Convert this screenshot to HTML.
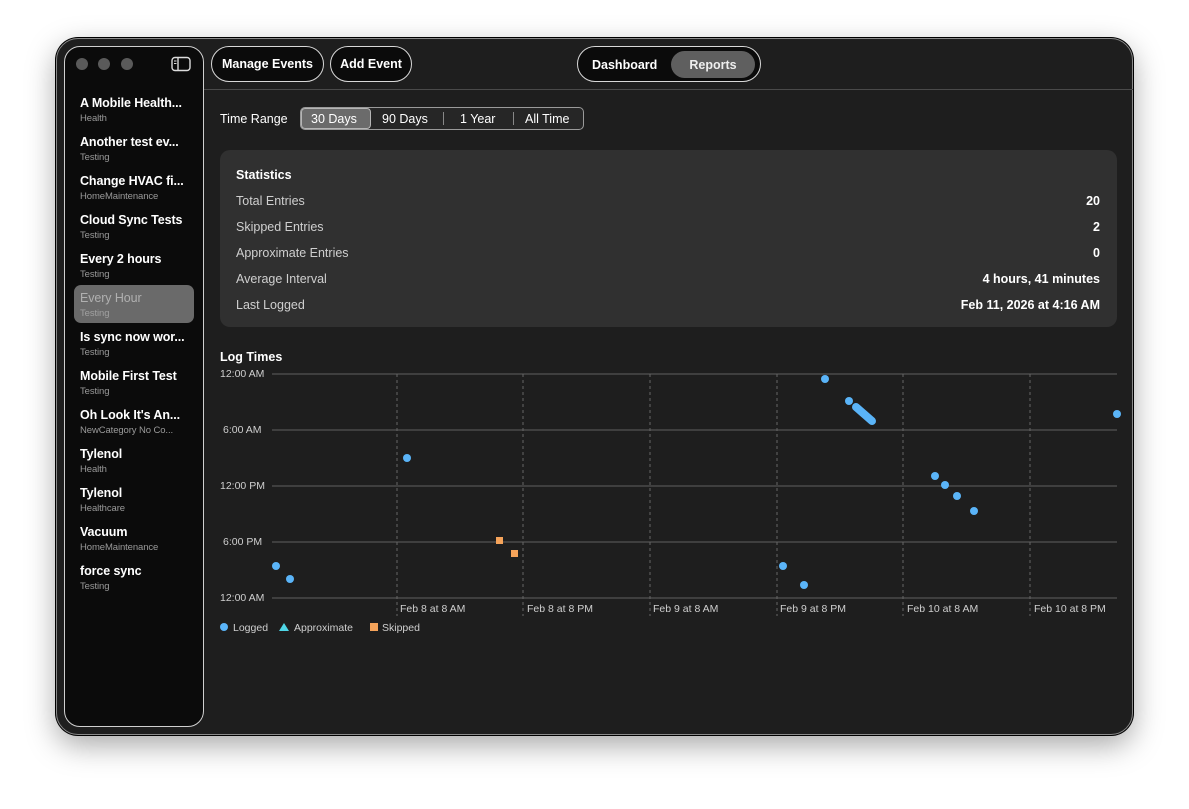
<!DOCTYPE html>
<html><head><meta charset="utf-8"><style>
*{margin:0;padding:0;box-sizing:border-box}
body{width:1189px;height:809px;background:#fff;font-family:"Liberation Sans",Arial,sans-serif;position:relative;overflow:hidden;color:#fff}
.win{position:absolute;left:56px;top:38px;width:1077px;height:697px;background:#1e1e1e;border-radius:22px;border:1px solid #8a8a8a;box-shadow:0 10px 30px rgba(0,0,0,.35),0 0 0 1px #000}
.side{position:absolute;left:64px;top:46px;width:140px;height:681px;background:#0b0b0b;border:1.5px solid #d0d0d0;border-radius:16px}
.dot{position:absolute;top:58px;width:12px;height:12px;border-radius:50%;background:#5a5a5a}
.item{position:absolute;left:80px;font-size:12.5px;font-weight:bold;letter-spacing:-.1px}
.item small{display:block;font-size:9.5px;color:#9a9a9a;font-weight:normal;margin-top:3px}
.btn{position:absolute;top:46px;height:36px;border:1.5px solid #d8d8d8;border-radius:18px;background:#0b0b0b;font-size:12.5px;font-weight:bold;line-height:35px;text-align:center}
.lbl{position:absolute;font-size:12.5px}
.r{position:absolute;font-size:12.5px;color:#cfcfcf;left:236px}
.v{position:absolute;font-size:12.5px;font-weight:bold;right:89px}
.ax{position:absolute;font-size:10.5px;color:#cfcfcf}
</style></head><body>
<div class="win"></div>
<div class="side"></div>
<div class="dot" style="left:76px"></div><div class="dot" style="left:98px"></div><div class="dot" style="left:121px"></div>
<svg style="position:absolute;left:171px;top:56px" width="20" height="16"><rect x="1" y="1.5" width="18" height="13" rx="3" fill="none" stroke="#ddd" stroke-width="1.4"/><line x1="7" y1="2" x2="7" y2="14" stroke="#ddd" stroke-width="1.4"/><line x1="3" y1="5" x2="5.5" y2="5" stroke="#ddd"/><line x1="3" y1="7.5" x2="5.5" y2="7.5" stroke="#ddd"/></svg>
<div style="position:absolute;left:74px;top:285px;width:120px;height:38px;background:#6a6a6a;border-radius:7px"></div>
<div class="item" style="top:96px">A Mobile Health...<small>Health</small></div>
<div class="item" style="top:135px">Another test ev...<small>Testing</small></div>
<div class="item" style="top:174px">Change HVAC fi...<small>HomeMaintenance</small></div>
<div class="item" style="top:213px">Cloud Sync Tests<small>Testing</small></div>
<div class="item" style="top:252px">Every 2 hours<small>Testing</small></div>
<div class="item" style="top:291px;color:#b0b0b0;font-weight:normal">Every Hour<small style="color:#a0a0a0">Testing</small></div>
<div class="item" style="top:330px">Is sync now wor...<small>Testing</small></div>
<div class="item" style="top:369px">Mobile First Test<small>Testing</small></div>
<div class="item" style="top:408px">Oh Look It's An...<small>NewCategory No Co...</small></div>
<div class="item" style="top:447px">Tylenol<small>Health</small></div>
<div class="item" style="top:486px">Tylenol<small>Healthcare</small></div>
<div class="item" style="top:525px">Vacuum<small>HomeMaintenance</small></div>
<div class="item" style="top:564px">force sync<small>Testing</small></div>

<div class="btn" style="left:211px;width:113px">Manage Events</div>
<div class="btn" style="left:330px;width:82px">Add Event</div>
<div class="btn" style="left:577px;width:184px"></div>
<div style="position:absolute;left:592px;top:58px;font-size:12.5px;font-weight:bold">Dashboard</div>
<div style="position:absolute;left:671px;top:51px;width:84px;height:27px;border-radius:14px;background:#5f5f5f;font-size:12.5px;font-weight:bold;text-align:center;line-height:28px;color:#eee">Reports</div>
<div style="position:absolute;left:204px;top:89px;width:929px;height:1px;background:#4a4a4a"></div>

<div class="lbl" style="left:220px;top:112px">Time Range</div>
<div style="position:absolute;left:300px;top:107px;width:284px;height:23px;border:1px solid #9a9a9a;border-radius:5px;background:#262626"></div>
<div style="position:absolute;left:301px;top:108px;width:70px;height:21px;border-radius:4px;background:#6b6b6b;border:1px solid #b5b5b5"></div>
<div class="lbl" style="left:311px;top:112px">30 Days</div>
<div class="lbl" style="left:382px;top:112px">90 Days</div>
<div style="position:absolute;left:443px;top:112px;width:1px;height:13px;background:#888"></div>
<div class="lbl" style="left:460px;top:112px">1 Year</div>
<div style="position:absolute;left:513px;top:112px;width:1px;height:13px;background:#888"></div>
<div class="lbl" style="left:525px;top:112px">All Time</div>

<div style="position:absolute;left:220px;top:150px;width:897px;height:177px;background:#303030;border-radius:10px"></div>
<div class="lbl" style="left:236px;top:168px;font-weight:bold">Statistics</div>
<div class="r" style="top:194px">Total Entries</div><div class="v" style="top:194px">20</div>
<div class="r" style="top:220px">Skipped Entries</div><div class="v" style="top:220px">2</div>
<div class="r" style="top:246px">Approximate Entries</div><div class="v" style="top:246px">0</div>
<div class="r" style="top:272px">Average Interval</div><div class="v" style="top:272px">4 hours, 41 minutes</div>
<div class="r" style="top:298px">Last Logged</div><div class="v" style="top:298px">Feb 11, 2026 at 4:16 AM</div>

<div class="lbl" style="left:220px;top:350px;font-weight:bold">Log Times</div>
<div class="ax" style="left:220px;top:368px">12:00 AM</div>
<div class="ax" style="left:223px;top:424px">6:00 AM</div>
<div class="ax" style="left:220px;top:480px">12:00 PM</div>
<div class="ax" style="left:223px;top:536px">6:00 PM</div>
<div class="ax" style="left:220px;top:592px">12:00 AM</div>
<div class="ax" style="left:400px;top:603px">Feb 8 at 8 AM</div>
<div class="ax" style="left:527px;top:603px">Feb 8 at 8 PM</div>
<div class="ax" style="left:653px;top:603px">Feb 9 at 8 AM</div>
<div class="ax" style="left:780px;top:603px">Feb 9 at 8 PM</div>
<div class="ax" style="left:907px;top:603px">Feb 10 at 8 AM</div>
<div class="ax" style="left:1034px;top:603px">Feb 10 at 8 PM</div>
<div class="ax" style="left:233px;top:622px">Logged</div>
<div class="ax" style="left:294px;top:622px">Approximate</div>
<div class="ax" style="left:382px;top:622px">Skipped</div>

<svg style="position:absolute;left:0;top:0" width="1189" height="809">
<g stroke="#4a4a4a" stroke-width="1.5">
<line x1="272" y1="374" x2="1117" y2="374"/><line x1="272" y1="430" x2="1117" y2="430"/><line x1="272" y1="486" x2="1117" y2="486"/><line x1="272" y1="542" x2="1117" y2="542"/><line x1="272" y1="598" x2="1117" y2="598"/>
</g>
<g stroke="#666" stroke-width="1" stroke-dasharray="3,3">
<line x1="397" y1="374" x2="397" y2="616"/><line x1="523" y1="374" x2="523" y2="616"/><line x1="650" y1="374" x2="650" y2="616"/><line x1="777" y1="374" x2="777" y2="616"/><line x1="903" y1="374" x2="903" y2="616"/><line x1="1030" y1="374" x2="1030" y2="616"/>
</g>
<g fill="#5ab4f8">
<circle cx="276" cy="566" r="4"/><circle cx="290" cy="579" r="4"/><circle cx="407" cy="458" r="4"/>
<circle cx="783" cy="566" r="4"/><circle cx="804" cy="585" r="4"/><circle cx="825" cy="379" r="4"/>
<circle cx="849" cy="401" r="4"/><circle cx="935" cy="476" r="4"/><circle cx="945" cy="485" r="4"/><circle cx="957" cy="496" r="4"/><circle cx="974" cy="511" r="4"/><circle cx="1117" cy="414" r="4"/>
<circle cx="224" cy="627" r="4"/>
</g>
<line x1="856" y1="407" x2="872" y2="421" stroke="#5ab4f8" stroke-width="8" stroke-linecap="round"/>
<polygon points="284,623 289,631 279,631" fill="#4fd6e6"/>
<g fill="#f5a35a"><rect x="496" y="537" width="7" height="7"/><rect x="511" y="550" width="7" height="7"/><rect x="370" y="623" width="8" height="8"/></g>
</svg>
</body></html>
